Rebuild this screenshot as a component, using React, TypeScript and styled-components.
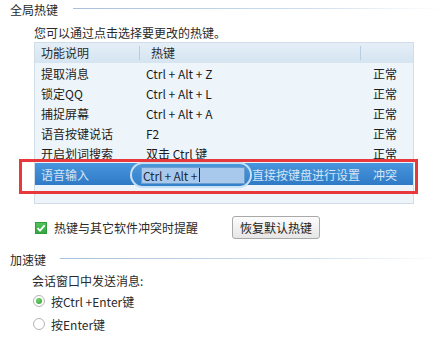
import React from 'react';
import styled, { createGlobalStyle } from 'styled-components';

const GlobalStyle = createGlobalStyle`
  html, body {
    margin: 0;
    padding: 0;
    background: #ffffff;
  }
  body {
    font-family: "Noto Sans CJK SC", "Microsoft YaHei", sans-serif;
    font-size: 12px;
    color: #1c1c1c;
  }
`;

const Page = styled.div`
  width: 441px;
  height: 361px;
  overflow: hidden;
  padding-top: 2px;
  box-sizing: border-box;
`;

const SectionHeader = styled.div<{ $gap: number; $top?: number }>`
  display: flex;
  align-items: center;
  height: 16px;
  padding-left: 10px;
  gap: ${p => p.$gap}px;
  margin-top: ${p => p.$top ?? 0}px;
`;

const SectionTitle = styled.span`
  line-height: 16px;
  color: #2a2a2a;
`;

const Rule = styled.div`
  flex: 1;
  height: 1px;
  margin-top: -3px;
  background: linear-gradient(to right, #a7c1dc, #cfdeed 65%, #ffffff);
`;

const Hint = styled.div<{ $left: number; $top: number }>`
  line-height: 14px;
  margin-top: ${p => p.$top}px;
  padding-left: ${p => p.$left}px;
  color: #2a2a2a;
`;

const TableArea = styled.div`
  position: relative;
  margin: 2px 0 0 34px;
  width: 380px;
`;

const Table = styled.div`
  height: 162px;
  box-sizing: border-box;
  border: 1px solid #d0dde8;
  background: #edf5fb;
  overflow: hidden;
`;

const HeaderRow = styled.div`
  display: grid;
  grid-template-columns: 104px 221px 1fr;
  height: 20px;
  align-items: center;
  background: linear-gradient(#e4eef7, #d5e4f1);
  color: #2a2a2a;
`;

const HeaderCell = styled.div<{ $pad: number; $sep?: boolean }>`
  position: relative;
  padding-left: ${p => p.$pad}px;
  height: 20px;
  line-height: 20px;
  box-sizing: border-box;

  &::before {
    content: '';
    display: ${p => (p.$sep ? 'block' : 'none')};
    position: absolute;
    left: 0;
    top: 3px;
    width: 1px;
    height: 14px;
    background: #b9cde0;
  }
`;

const Row = styled.div<{ $selected?: boolean }>`
  display: grid;
  grid-template-columns: 104px 221px 1fr;
  align-items: center;
  height: ${p => (p.$selected ? 22 : 20)}px;
  background: ${p => (p.$selected ? 'linear-gradient(#4896dd, #2f7ac6)' : 'transparent')};
  color: ${p => (p.$selected ? '#d6e5f4' : '#1c1c1c')};
`;

const Cell = styled.div<{ $pad: number }>`
  padding-left: ${p => p.$pad}px;
  white-space: nowrap;
`;

const Note = styled.span`
  padding-left: 113px;
`;

const EditPill = styled.div`
  position: absolute;
  left: 96px;
  top: 120px;
  width: 122px;
  height: 26px;
  box-sizing: border-box;
  border: 2px solid rgba(225, 238, 250, 0.85);
  border-radius: 13px;
  background: linear-gradient(#4b97dc, #3380ca);
  display: flex;
  align-items: center;
  padding-left: 9px;
`;

const EditBox = styled.div`
  display: flex;
  align-items: center;
  width: 104px;
  height: 17px;
  box-sizing: border-box;
  border: 1px solid #6c9dcf;
  background: #a8c9ec;
  color: #1c2c40;
  padding-left: 1px;
  white-space: nowrap;
  letter-spacing: -0.2px;
`;

const Caret = styled.span`
  display: inline-block;
  width: 1px;
  height: 14px;
  margin-left: 2px;
  background: #1c2c40;
`;

const Annotation = styled.div`
  position: absolute;
  left: -15px;
  right: -4px;
  top: 117px;
  height: 35px;
  box-sizing: border-box;
  border: 3px solid #e8383b;
  pointer-events: none;
`;

const OptionRow = styled.div`
  display: flex;
  align-items: center;
  height: 23px;
  margin-top: 12px;
  padding-left: 35px;
`;

const CheckLabel = styled.label`
  display: flex;
  align-items: center;
  gap: 7px;
  width: 197px;
  color: #2a2a2a;
`;

const CheckBox = styled.span`
  display: inline-flex;
  align-items: center;
  justify-content: center;
  width: 12px;
  height: 12px;
  box-sizing: border-box;
  border: 1px solid #2f9c3c;
  background: linear-gradient(#52c25c, #33a640);
`;

const Button = styled.button`
  width: 88px;
  height: 23px;
  padding: 0;
  border: 1px solid #a9a9a9;
  border-radius: 3px;
  background: linear-gradient(#fcfcfc, #e6e6e6);
  font-family: inherit;
  font-size: 12px;
  color: #222;
`;

const RadioRow = styled.label<{ $top: number }>`
  display: flex;
  align-items: center;
  gap: 6px;
  height: 14px;
  margin-top: ${p => p.$top}px;
  padding-left: 33px;
  color: #2a2a2a;
`;

const Radio = styled.span<{ $checked?: boolean }>`
  display: inline-flex;
  align-items: center;
  justify-content: center;
  width: 12px;
  height: 12px;
  box-sizing: border-box;
  border-radius: 50%;
  border: 1px solid #b4b4b4;
  background: #fff;

  &::after {
    content: '';
    display: ${p => (p.$checked ? 'block' : 'none')};
    width: 6px;
    height: 6px;
    border-radius: 50%;
    background: radial-gradient(circle at 40% 35%, #6fd46a, #2e9e35);
  }
`;

const hotkeys = [
  { name: '提取消息', key: 'Ctrl + Alt + Z', state: '正常' },
  { name: '锁定QQ', key: 'Ctrl + Alt + L', state: '正常' },
  { name: '捕捉屏幕', key: 'Ctrl + Alt + A', state: '正常' },
  { name: '语音按键说话', key: 'F2', state: '正常' },
  { name: '开启划词搜索', key: '双击 Ctrl 键', state: '正常' },
];

const App: React.FC = () => {
  return (
    <Page>
      <GlobalStyle />
      <SectionHeader $gap={15}>
        <SectionTitle>全局热键</SectionTitle>
        <Rule />
      </SectionHeader>
      <Hint $left={34} $top={8}>您可以通过点击选择要更改的热键。</Hint>

      <TableArea>
        <Table>
          <HeaderRow>
            <HeaderCell $pad={6}>功能说明</HeaderCell>
            <HeaderCell $pad={12} $sep>热键</HeaderCell>
            <HeaderCell $pad={0} $sep />
          </HeaderRow>
          {hotkeys.map(h => (
            <Row key={h.name}>
              <Cell $pad={6}>{h.name}</Cell>
              <Cell $pad={7}>{h.key}</Cell>
              <Cell $pad={13}>{h.state}</Cell>
            </Row>
          ))}
          <Row $selected>
            <Cell $pad={6}>语音输入</Cell>
            <Cell $pad={0}><Note>直接按键盘进行设置</Note></Cell>
            <Cell $pad={13}>冲突</Cell>
          </Row>
        </Table>
        <EditPill>
          <EditBox>
            Ctrl + Alt +<Caret />
          </EditBox>
        </EditPill>
        <Annotation />
      </TableArea>

      <OptionRow>
        <CheckLabel>
          <CheckBox>
            <svg width="10" height="10" viewBox="0 0 10 10">
              <path d="M1.5 5.2 L4 7.6 L8.6 2.4" fill="none" stroke="#fff" strokeWidth="1.8" />
            </svg>
          </CheckBox>
          热键与其它软件冲突时提醒
        </CheckLabel>
        <Button>恢复默认热键</Button>
      </OptionRow>

      <SectionHeader $gap={14} $top={13}>
        <SectionTitle>加速键</SectionTitle>
        <Rule />
      </SectionHeader>
      <Hint $left={32} $top={6}>会话窗口中发送消息:</Hint>
      <RadioRow $top={6}>
        <Radio $checked />
        按Ctrl +Enter键
      </RadioRow>
      <RadioRow $top={9}>
        <Radio />
        按Enter键
      </RadioRow>
    </Page>
  );
};

export default App;
